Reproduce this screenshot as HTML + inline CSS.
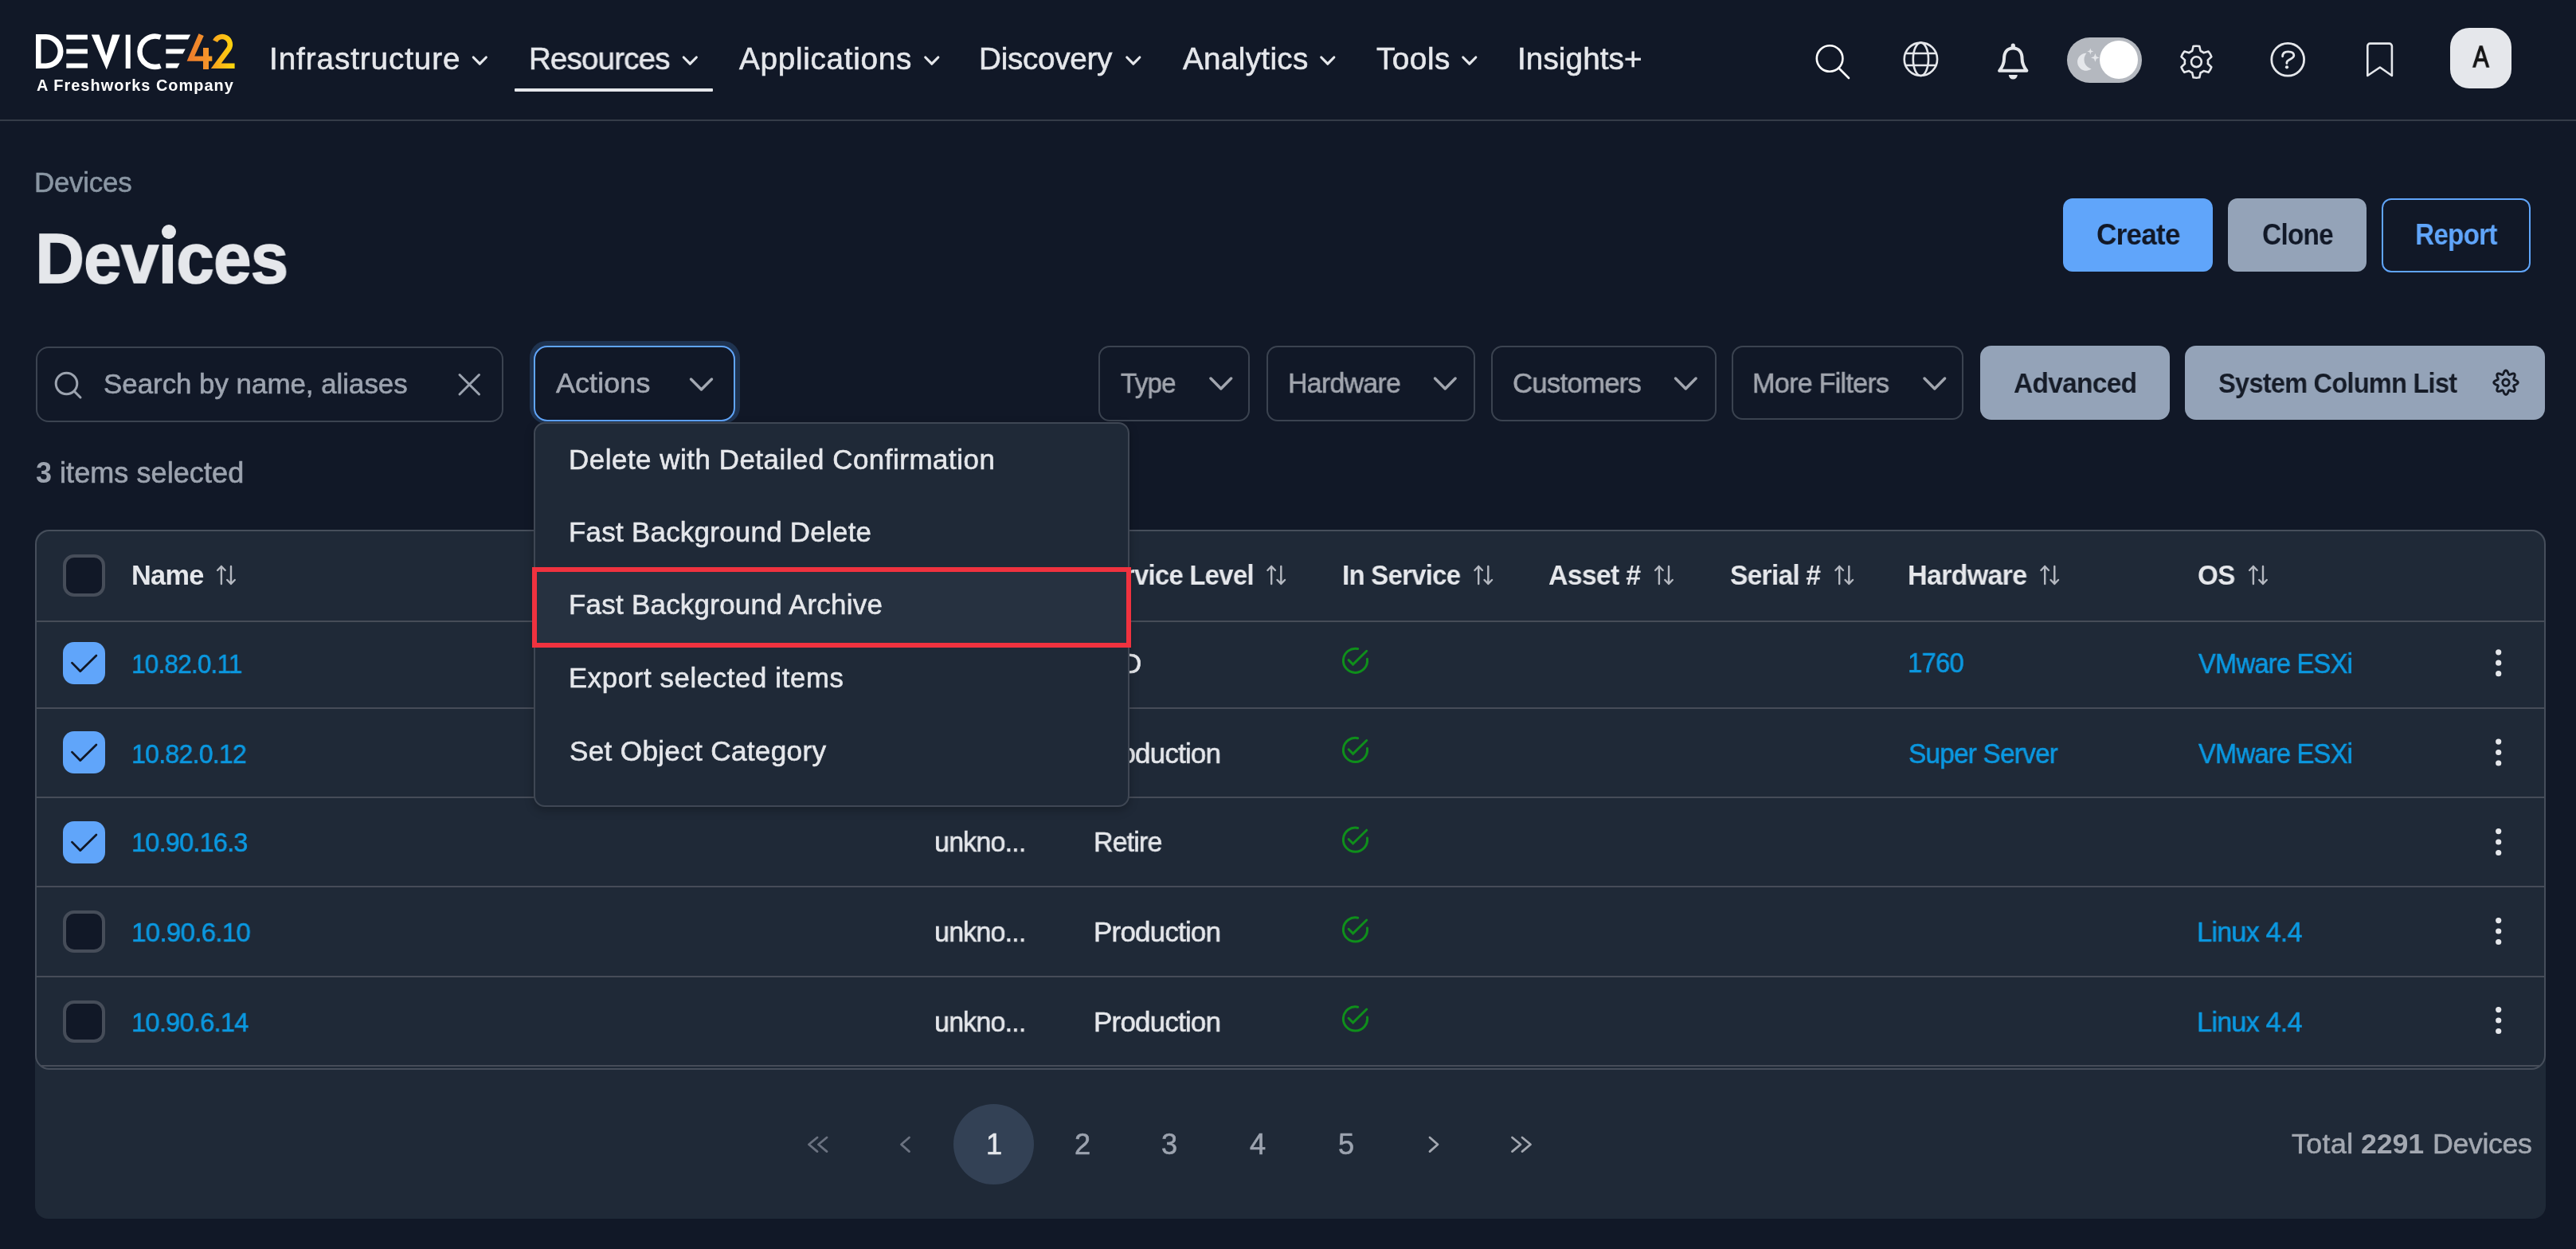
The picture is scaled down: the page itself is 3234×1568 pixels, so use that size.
<!DOCTYPE html>
<html><head><meta charset="utf-8">
<style>
html,body{margin:0;padding:0}
body{width:3234px;height:1568px;overflow:hidden;background:#111827;position:relative;font-family:"Liberation Sans",sans-serif}
.t{position:absolute;white-space:nowrap;line-height:1;-webkit-text-stroke:0.6px currentColor;will-change:transform}
.t[style*="font-weight:700"]{-webkit-text-stroke:0}
.b{position:absolute;box-sizing:border-box}
svg{position:absolute;left:0;top:0;overflow:visible}
</style></head><body>

<!-- NAV -->
<div class="b" style="left:0;top:150px;width:3234px;height:2px;background:#353c48"></div>
<div class="b" style="left:646px;top:111px;width:249px;height:4px;background:#e5e7eb;border-radius:1px"></div>
<div class="b" style="left:2595px;top:47px;width:94px;height:57px;border-radius:29px;background:#b4b8bf"></div>
<div class="b" style="left:2636px;top:51px;width:48px;height:48px;border-radius:50%;background:#ffffff"></div>
<div class="b" style="left:3076px;top:35px;width:77px;height:76px;border-radius:24px;background:#e5e7eb"></div>

<!-- HEADER BUTTONS -->
<div class="b" style="left:2590px;top:249px;width:188px;height:92px;border-radius:12px;background:#60a5fa"></div>
<div class="b" style="left:2797px;top:249px;width:174px;height:92px;border-radius:12px;background:#94a3b8"></div>
<div class="b" style="left:2990px;top:249px;width:187px;height:93px;border-radius:12px;border:2.5px solid #60a5fa"></div>

<!-- TOOLBAR -->
<div class="b" style="left:45px;top:435px;width:587px;height:95px;border-radius:16px;border:2px solid #3b4350"></div>
<div class="b" style="left:665px;top:428px;width:264px;height:104px;border-radius:21px;background:#1f3350"></div>
<div class="b" style="left:670px;top:434px;width:253px;height:95px;border-radius:17px;border:2.5px solid #60a5fa;background:#111827"></div>
<div class="b" style="left:1379px;top:434px;width:190px;height:95px;border-radius:14px;border:2px solid #3b4350"></div>
<div class="b" style="left:1590px;top:434px;width:262px;height:95px;border-radius:14px;border:2px solid #3b4350"></div>
<div class="b" style="left:1872px;top:434px;width:283px;height:95px;border-radius:14px;border:2px solid #3b4350"></div>
<div class="b" style="left:2174px;top:434px;width:291px;height:93px;border-radius:14px;border:2px solid #3b4350"></div>
<div class="b" style="left:2486px;top:434px;width:238px;height:93px;border-radius:14px;background:#94a3b8"></div>
<div class="b" style="left:2743px;top:434px;width:452px;height:93px;border-radius:14px;background:#94a3b8"></div>

<!-- TABLE CARD -->
<div class="b" style="left:44px;top:665px;width:3152px;height:865px;border-radius:16px;background:#1f2937"></div>
<div class="b" style="left:44px;top:665px;width:3152px;height:678px;border-radius:18px;border:2px solid #464e5b"></div>
<div class="b" style="left:46px;top:779px;width:3148px;height:2px;background:#464c58"></div>
<div class="b" style="left:46px;top:888px;width:3148px;height:2px;background:#464c58"></div>
<div class="b" style="left:46px;top:1000px;width:3148px;height:2px;background:#464c58"></div>
<div class="b" style="left:46px;top:1112px;width:3148px;height:2px;background:#464c58"></div>
<div class="b" style="left:46px;top:1225px;width:3148px;height:2px;background:#464c58"></div>
<div class="b" style="left:52px;top:1337px;width:3136px;height:2px;background:#464c58"></div>

<!-- checkboxes -->
<div class="b" style="left:79px;top:696px;width:53px;height:53px;border-radius:14px;border:4px solid #464d59;background:#111827"></div>
<div class="b" style="left:79px;top:806px;width:53px;height:53px;border-radius:14px;background:#60a5fa"></div>
<div class="b" style="left:79px;top:918px;width:53px;height:53px;border-radius:14px;background:#60a5fa"></div>
<div class="b" style="left:79px;top:1031px;width:53px;height:53px;border-radius:14px;background:#60a5fa"></div>
<div class="b" style="left:79px;top:1143px;width:53px;height:53px;border-radius:14px;border:4px solid #464d59;background:#111827"></div>
<div class="b" style="left:79px;top:1256px;width:53px;height:53px;border-radius:14px;border:4px solid #464d59;background:#111827"></div>

<!-- pagination current -->
<div class="b" style="left:1197px;top:1386px;width:101px;height:101px;border-radius:50%;background:#334155"></div>

<svg width="3234" height="1568" viewBox="0 0 3234 1568">
<defs>
<linearGradient id="g42" x1="234" y1="0" x2="295" y2="0" gradientUnits="userSpaceOnUse">
<stop offset="0" stop-color="#ec7a2c"/><stop offset="0.45" stop-color="#f5952a"/><stop offset="0.6" stop-color="#fbab1c"/><stop offset="1" stop-color="#fdd80c"/>
</linearGradient>
</defs>
<!-- LOGO -->
<g fill="#ffffff">
<path d="M45,43 H58 A21.5,21.5 0 0 1 58,86 H45 Z M51.5,49.5 V79.5 H57.5 A15,15 0 0 0 57.5,49.5 Z" fill-rule="evenodd"/>
<rect x="83.3" y="43.6" width="26.6" height="6"/>
<rect x="83.3" y="61.5" width="26.6" height="6"/>
<rect x="83.3" y="79.5" width="26.6" height="6"/>
<path d="M114.8,43.6 H124.5 L133.3,70 L141,43.6 H150.7 L133.8,87.6 Z"/>
<rect x="157.7" y="43.6" width="6" height="42.4"/>
<path d="M201.5,46.8 A19.2,19.2 0 1 0 201.5,82.7" fill="none" stroke="#ffffff" stroke-width="6.5"/>
<path d="M208.3,43.6 H239.2 L236,49.6 H208.3 Z"/>
<path d="M208.3,61.5 H232.7 L229.5,67.5 H208.3 Z"/>
<path d="M208.3,79.5 H225.6 L222.4,85.5 H208.3 Z"/>
</g>
<path d="M249.5,42.2 L255.8,45 L244.2,70.5 H255 V60 H262 V70.5 H266.3 V76.8 H262 V86.9 H255 V76.8 H234.6 Z" fill="url(#g42)"/>
<path d="M270.07,51.74 A9.85,9.85 0 1 1 287.07,61.55 L271.3,82.7 H294.6" fill="none" stroke="url(#g42)" stroke-width="6.5" stroke-linejoin="miter" stroke-miterlimit="10"/>

<!-- nav chevrons -->
<g fill="none" stroke="#e5e7eb" stroke-width="3.2" stroke-linecap="round" stroke-linejoin="round">
<path d="M594.3,72 L602.3,80.2 L610.3,72"/>
<path d="M858.3,72 L866.3,80.2 L874.3,72"/>
<path d="M1161.8,72 L1169.8,80.2 L1177.8,72"/>
<path d="M1414.8,72 L1422.8,80.2 L1430.8,72"/>
<path d="M1658.8,72 L1666.8,80.2 L1674.8,72"/>
<path d="M1836.8,72 L1844.8,80.2 L1852.8,72"/>
</g>

<!-- right icons -->
<g fill="none" stroke="#ffffff" stroke-width="2.6" stroke-linecap="round" stroke-linejoin="round">
<circle cx="2297.1" cy="73.5" r="16.3"/>
<path d="M2309.5,86.5 L2321,98"/>
</g>
<g fill="none" stroke="#e5e7eb" stroke-width="2.6">
<circle cx="2411.4" cy="74.3" r="20.7"/>
<ellipse cx="2411.4" cy="74.3" rx="9.6" ry="20.7"/>
<path d="M2392,67 H2431 M2392,82 H2431"/>
</g>
<g fill="none" stroke="#e5e7eb" stroke-width="4" stroke-linejoin="round">
<path d="M2527.3,60.5 C2519.5,60.5 2516,66 2516,74 C2516,80.5 2513.5,84.5 2510.2,88.8 H2544.4 C2541.1,84.5 2538.6,80.5 2538.6,74 C2538.6,66 2535.1,60.5 2527.3,60.5 Z"/>
</g>
<path d="M2527.3,54.5 a2.6,2.6 0 0 1 2.6,2.6 v2 h-5.2 v-2 a2.6,2.6 0 0 1 2.6,-2.6 Z" fill="#e5e7eb"/>
<path d="M2521.8,94 H2532.8 A5.5,5.5 0 0 1 2521.8,94 Z" fill="#e5e7eb"/>
<!-- moon & stars -->
<path d="M2619.5,66.8 A11,11 0 1 0 2625.7,86.5 A12,12 0 0 1 2619.5,66.8 Z" fill="#e5e7eb"/>
<path d="M2624.3,60.5 L2625.3,63.5 L2628.3,64.5 L2625.3,65.5 L2624.3,68.5 L2623.3,65.5 L2620.3,64.5 L2623.3,63.5 Z" fill="#e5e7eb"/>
<path d="M2630.4,67 L2631.8,71 L2635.8,72.4 L2631.8,73.8 L2630.4,77.8 L2629,73.8 L2625,72.4 L2629,71 Z" fill="#e5e7eb"/>
<!-- gear -->
<g fill="none" stroke="#e5e7eb" stroke-width="2.6" stroke-linejoin="round">
<path d="M2752.17,64.07 L2753.58,58.07 A20.0,20.0 0 0 1 2761.22,58.07 L2762.63,64.07 A14.6,14.6 0 0 1 2766.59,66.35 L2772.49,64.58 A20.0,20.0 0 0 1 2776.31,71.19 L2771.82,75.42 A14.6,14.6 0 0 1 2771.82,79.98 L2776.31,84.21 A20.0,20.0 0 0 1 2772.49,90.82 L2766.59,89.05 A14.6,14.6 0 0 1 2762.63,91.33 L2761.22,97.33 A20.0,20.0 0 0 1 2753.58,97.33 L2752.17,91.33 A14.6,14.6 0 0 1 2748.21,89.05 L2742.31,90.82 A20.0,20.0 0 0 1 2738.49,84.21 L2742.98,79.98 A14.6,14.6 0 0 1 2742.98,75.42 L2738.49,71.19 A20.0,20.0 0 0 1 2742.31,64.58 L2748.21,66.35 A14.6,14.6 0 0 1 2752.17,64.07 Z"/>
<circle cx="2757.4" cy="77.7" r="6.4"/>
</g>
<!-- help -->
<g fill="none" stroke="#e5e7eb" stroke-width="2.8" stroke-linecap="round">
<circle cx="2872.2" cy="74.8" r="20.4"/>
<path d="M2865.6,70.8 C2865.6,66.6 2867.8,64.8 2872.6,64.8 C2877.4,64.8 2879.8,66.6 2879.8,69.4 C2879.8,72 2877.8,73 2875,74.4 C2872,75.9 2870.9,76.9 2870.9,78.6 V79.6"/>
</g>
<circle cx="2871" cy="84.3" r="2.1" fill="#e5e7eb"/>
<!-- bookmark -->
<path d="M2975.5,54.6 H2999.5 A3.4,3.4 0 0 1 3002.9,58 V95 L2987.9,84.5 L2972.3,95 V58 A3.2,3.2 0 0 1 2975.5,54.6 Z" fill="none" stroke="#e5e7eb" stroke-width="2.6" stroke-linejoin="round"/>

<!-- search box icons -->
<g fill="none" stroke="#9ca3af" stroke-width="3" stroke-linecap="round">
<circle cx="83.5" cy="481.5" r="13.3"/>
<path d="M93.5,491.5 L101,499"/>
<path d="M577,470.5 L601.5,495 M601.5,470.5 L577,495"/>
</g>
<!-- actions chevron -->
<path d="M867.5,476 L880.5,489 L893.5,476" fill="none" stroke="#a3a8b2" stroke-width="3.5" stroke-linecap="round" stroke-linejoin="round"/>
<!-- filter chevrons -->
<g fill="none" stroke="#a1a5ae" stroke-width="3.5" stroke-linecap="round" stroke-linejoin="round">
<path d="M1520,475 L1532.8,488 L1545.6,475"/>
<path d="M1801.5,475 L1814.3,488 L1827.1,475"/>
<path d="M2103.5,475 L2116.3,488 L2129.1,475"/>
<path d="M2416,475 L2428.8,488 L2441.6,475"/>
</g>
<!-- System column gear -->
<g fill="none" stroke="#161b26" stroke-width="2.9" stroke-linejoin="round">
<path d="M3161.20,480.20 L3161.14,480.60 L3160.98,480.99 L3160.72,481.36 L3160.36,481.71 L3159.93,482.03 L3159.44,482.33 L3158.92,482.59 L3158.38,482.83 L3157.85,483.05 L3157.35,483.24 L3156.89,483.43 L3156.50,483.61 L3156.18,483.80 L3155.94,484.02 L3155.79,484.26 L3155.73,484.53 L3155.75,484.85 L3155.84,485.21 L3155.98,485.62 L3156.18,486.07 L3156.39,486.57 L3156.62,487.09 L3156.83,487.64 L3157.01,488.20 L3157.15,488.75 L3157.22,489.29 L3157.22,489.79 L3157.15,490.24 L3156.99,490.63 L3156.75,490.95 L3156.43,491.19 L3156.04,491.35 L3155.59,491.42 L3155.09,491.42 L3154.55,491.35 L3154.00,491.21 L3153.44,491.03 L3152.89,490.82 L3152.37,490.59 L3151.88,490.38 L3151.42,490.18 L3151.01,490.04 L3150.65,489.95 L3150.33,489.93 L3150.06,489.99 L3149.82,490.14 L3149.60,490.38 L3149.41,490.70 L3149.23,491.09 L3149.04,491.55 L3148.85,492.05 L3148.63,492.58 L3148.39,493.12 L3148.13,493.64 L3147.83,494.13 L3147.51,494.56 L3147.16,494.92 L3146.79,495.18 L3146.40,495.34 L3146.00,495.40 L3145.60,495.34 L3145.21,495.18 L3144.84,494.92 L3144.49,494.56 L3144.17,494.13 L3143.87,493.64 L3143.61,493.12 L3143.37,492.58 L3143.15,492.05 L3142.96,491.55 L3142.77,491.09 L3142.59,490.70 L3142.40,490.38 L3142.18,490.14 L3141.94,489.99 L3141.67,489.93 L3141.35,489.95 L3140.99,490.04 L3140.58,490.18 L3140.12,490.38 L3139.63,490.59 L3139.11,490.82 L3138.56,491.03 L3138.00,491.21 L3137.45,491.35 L3136.91,491.42 L3136.41,491.42 L3135.96,491.35 L3135.57,491.19 L3135.25,490.95 L3135.01,490.63 L3134.85,490.24 L3134.78,489.79 L3134.78,489.29 L3134.85,488.75 L3134.99,488.20 L3135.17,487.64 L3135.38,487.09 L3135.61,486.57 L3135.82,486.07 L3136.02,485.62 L3136.16,485.21 L3136.25,484.85 L3136.27,484.53 L3136.21,484.26 L3136.06,484.02 L3135.82,483.80 L3135.50,483.61 L3135.11,483.43 L3134.65,483.24 L3134.15,483.05 L3133.62,482.83 L3133.08,482.59 L3132.56,482.33 L3132.07,482.03 L3131.64,481.71 L3131.28,481.36 L3131.02,480.99 L3130.86,480.60 L3130.80,480.20 L3130.86,479.80 L3131.02,479.41 L3131.28,479.04 L3131.64,478.69 L3132.07,478.37 L3132.56,478.07 L3133.08,477.81 L3133.62,477.57 L3134.15,477.35 L3134.65,477.16 L3135.11,476.97 L3135.50,476.79 L3135.82,476.60 L3136.06,476.38 L3136.21,476.14 L3136.27,475.87 L3136.25,475.55 L3136.16,475.19 L3136.02,474.78 L3135.82,474.32 L3135.61,473.83 L3135.38,473.31 L3135.17,472.76 L3134.99,472.20 L3134.85,471.65 L3134.78,471.11 L3134.78,470.61 L3134.85,470.16 L3135.01,469.77 L3135.25,469.45 L3135.57,469.21 L3135.96,469.05 L3136.41,468.98 L3136.91,468.98 L3137.45,469.05 L3138.00,469.19 L3138.56,469.37 L3139.11,469.58 L3139.63,469.81 L3140.12,470.02 L3140.58,470.22 L3140.99,470.36 L3141.35,470.45 L3141.67,470.47 L3141.94,470.41 L3142.18,470.26 L3142.40,470.02 L3142.59,469.70 L3142.77,469.31 L3142.96,468.85 L3143.15,468.35 L3143.37,467.82 L3143.61,467.28 L3143.87,466.76 L3144.17,466.27 L3144.49,465.84 L3144.84,465.48 L3145.21,465.22 L3145.60,465.06 L3146.00,465.00 L3146.40,465.06 L3146.79,465.22 L3147.16,465.48 L3147.51,465.84 L3147.83,466.27 L3148.13,466.76 L3148.39,467.28 L3148.63,467.82 L3148.85,468.35 L3149.04,468.85 L3149.23,469.31 L3149.41,469.70 L3149.60,470.02 L3149.82,470.26 L3150.06,470.41 L3150.33,470.47 L3150.65,470.45 L3151.01,470.36 L3151.42,470.22 L3151.88,470.02 L3152.37,469.81 L3152.89,469.58 L3153.44,469.37 L3154.00,469.19 L3154.55,469.05 L3155.09,468.98 L3155.59,468.98 L3156.04,469.05 L3156.43,469.21 L3156.75,469.45 L3156.99,469.77 L3157.15,470.16 L3157.22,470.61 L3157.22,471.11 L3157.15,471.65 L3157.01,472.20 L3156.83,472.76 L3156.62,473.31 L3156.39,473.83 L3156.18,474.32 L3155.98,474.78 L3155.84,475.19 L3155.75,475.55 L3155.73,475.87 L3155.79,476.14 L3155.94,476.38 L3156.18,476.60 L3156.50,476.79 L3156.89,476.97 L3157.35,477.16 L3157.85,477.35 L3158.38,477.57 L3158.92,477.81 L3159.44,478.07 L3159.93,478.37 L3160.36,478.69 L3160.72,479.04 L3160.98,479.41 L3161.14,479.80 Z"/>
<circle cx="3146" cy="480.2" r="4.2"/>
</g>

<!-- sort icons -->
<g fill="none" stroke="#b4b8c0" stroke-width="2.4" stroke-linecap="round" stroke-linejoin="round" id="sorts"><path d="M277.9,733 V711 M273.09999999999997,716 L277.9,711 L282.7,716"/><path d="M290.0,711 V733 M285.2,728 L290.0,733 L294.8,728"/><path d="M1596.2,733 V711 M1591.4,716 L1596.2,711 L1601.0,716"/><path d="M1608.3,711 V733 M1603.5,728 L1608.3,733 L1613.1,728"/><path d="M1856.2,733 V711 M1851.4,716 L1856.2,711 L1861.0,716"/><path d="M1868.3,711 V733 M1863.5,728 L1868.3,733 L1873.1,728"/><path d="M2082.8999999999996,733 V711 M2078.0999999999995,716 L2082.8999999999996,711 L2087.7,716"/><path d="M2095.0,711 V733 M2090.2,728 L2095.0,733 L2099.8,728"/><path d="M2309.2,733 V711 M2304.3999999999996,716 L2309.2,711 L2314.0,716"/><path d="M2321.3,711 V733 M2316.5,728 L2321.3,733 L2326.1000000000004,728"/><path d="M2567.2,733 V711 M2562.3999999999996,716 L2567.2,711 L2572.0,716"/><path d="M2579.3,711 V733 M2574.5,728 L2579.3,733 L2584.1000000000004,728"/><path d="M2828.8999999999996,733 V711 M2824.0999999999995,716 L2828.8999999999996,711 L2833.7,716"/><path d="M2841.0,711 V733 M2836.2,728 L2841.0,733 L2845.8,728"/></g>

<!-- checkmarks in checkboxes -->
<g fill="none" stroke="#111827" stroke-width="2.7" stroke-linecap="round" stroke-linejoin="round">
<path d="M90.4,832.1 L100.8,842.8 L120.9,823"/>
<path d="M90.4,944.1 L100.8,954.8 L120.9,935"/>
<path d="M90.4,1057.1 L100.8,1067.8 L120.9,1048"/>
</g>

<!-- green status checks -->
<g fill="none" stroke="#0f8f1b" stroke-width="3.0" stroke-linecap="round" stroke-linejoin="miter" id="greens"><path d="M1716.45,827.20 A15.1,15.1 0 1 1 1704.64,814.53"/><path d="M1693.10,828.60 L1698.60,834.10 L1715.70,817.30"/><path d="M1716.45,939.40 A15.1,15.1 0 1 1 1704.64,926.73"/><path d="M1693.10,940.80 L1698.60,946.30 L1715.70,929.50"/><path d="M1716.45,1052.10 A15.1,15.1 0 1 1 1704.64,1039.43"/><path d="M1693.10,1053.50 L1698.60,1059.00 L1715.70,1042.20"/><path d="M1716.45,1164.90 A15.1,15.1 0 1 1 1704.64,1152.23"/><path d="M1693.10,1166.30 L1698.60,1171.80 L1715.70,1155.00"/><path d="M1716.45,1276.90 A15.1,15.1 0 1 1 1704.64,1264.23"/><path d="M1693.10,1278.30 L1698.60,1283.80 L1715.70,1267.00"/></g>

<!-- kebabs -->
<g fill="#e5e7eb" id="kebabs"><circle cx="3136.7" cy="818.8" r="3.6"/><circle cx="3136.7" cy="832.2" r="3.6"/><circle cx="3136.7" cy="845.7" r="3.6"/><circle cx="3136.7" cy="931.1" r="3.6"/><circle cx="3136.7" cy="944.5" r="3.6"/><circle cx="3136.7" cy="958.0" r="3.6"/><circle cx="3136.7" cy="1043.6" r="3.6"/><circle cx="3136.7" cy="1057.0" r="3.6"/><circle cx="3136.7" cy="1070.5" r="3.6"/><circle cx="3136.7" cy="1155.6" r="3.6"/><circle cx="3136.7" cy="1169.0" r="3.6"/><circle cx="3136.7" cy="1182.5" r="3.6"/><circle cx="3136.7" cy="1267.6" r="3.6"/><circle cx="3136.7" cy="1281.0" r="3.6"/><circle cx="3136.7" cy="1294.5" r="3.6"/></g>

<!-- pagination arrows -->
<g fill="none" stroke="#6b7280" stroke-width="2.8" stroke-linecap="round" stroke-linejoin="round">
<path d="M1026,1428 L1015.5,1436.8 L1026,1445.6 M1038,1428 L1027.5,1436.8 L1038,1445.6"/>
<path d="M1141.5,1428 L1131.5,1436.8 L1141.5,1445.6"/>
</g>
<g fill="none" stroke="#a3a8b1" stroke-width="2.8" stroke-linecap="round" stroke-linejoin="round">
<path d="M1795,1428 L1805,1436.8 L1795,1445.6"/>
<path d="M1898.5,1428 L1909,1436.8 L1898.5,1445.6 M1911,1428 L1921.5,1436.8 L1911,1445.6"/>
</g>
</svg>

<span class="t" style="left:46.0px;top:97.7px;font-size:19.91px;font-weight:700;color:#ffffff;letter-spacing:1.04px;">A Freshworks Company</span>
<span class="t" style="left:338.0px;top:55.1px;font-size:38.66px;font-weight:400;color:#e5e7eb;letter-spacing:0.91px;">Infrastructure</span>
<span class="t" style="left:663.8px;top:55.1px;font-size:38.66px;font-weight:400;color:#e5e7eb;letter-spacing:-0.80px;transform:scaleX(0.9952);transform-origin:3.00px 50%">Resources</span>
<span class="t" style="left:928.0px;top:55.1px;font-size:38.66px;font-weight:400;color:#e5e7eb;letter-spacing:0.72px;">Applications</span>
<span class="t" style="left:1229.0px;top:55.1px;font-size:38.66px;font-weight:400;color:#e5e7eb;letter-spacing:-0.29px;">Discovery</span>
<span class="t" style="left:1485.0px;top:55.1px;font-size:38.66px;font-weight:400;color:#e5e7eb;letter-spacing:0.33px;">Analytics</span>
<span class="t" style="left:1728.0px;top:55.1px;font-size:38.66px;font-weight:400;color:#e5e7eb;letter-spacing:0.52px;">Tools</span>
<span class="t" style="left:1905.0px;top:55.1px;font-size:38.66px;font-weight:400;color:#e5e7eb;letter-spacing:0.10px;">Insights+</span>
<span class="t" style="left:3102.0px;top:52.7px;font-size:37.65px;font-weight:400;color:#161616;letter-spacing:0.00px;-webkit-text-stroke:1.3px #161616;transform:scaleX(0.8);transform-origin:13px 50%">A</span>
<span class="t" style="left:43.4px;top:212.3px;font-size:34.88px;font-weight:400;color:#8a96a3;letter-spacing:-0.23px;">Devices</span>
<span class="t" style="left:43.8px;top:279.7px;font-size:89.83px;font-weight:700;color:#e5e7eb;letter-spacing:-0.80px;-webkit-text-stroke:1.6px #e5e7eb;transform:scaleX(0.9493);transform-origin:6.00px 50%">Devıces</span>
<span class="t" style="left:2631.6px;top:276.6px;font-size:36.34px;font-weight:700;color:#111827;letter-spacing:-0.80px;transform:scaleX(0.9656);transform-origin:1.00px 50%">Create</span>
<span class="t" style="left:2839.5px;top:276.6px;font-size:36.34px;font-weight:700;color:#111827;letter-spacing:-0.80px;transform:scaleX(0.9172);transform-origin:1.00px 50%">Clone</span>
<span class="t" style="left:3031.5px;top:276.6px;font-size:36.34px;font-weight:700;color:#60a5fa;letter-spacing:-0.80px;transform:scaleX(0.9130);transform-origin:2.00px 50%">Report</span>
<span class="t" style="left:129.8px;top:465.2px;font-size:34.88px;font-weight:400;color:#9ca3af;letter-spacing:-0.01px;">Search by name, aliases</span>
<span class="t" style="left:697.7px;top:463.5px;font-size:35.90px;font-weight:400;color:#a3a8b2;letter-spacing:0.11px;">Actions</span>
<span class="t" style="left:1406.5px;top:464.1px;font-size:35.47px;font-weight:400;color:#a1a5ae;letter-spacing:-0.80px;transform:scaleX(0.9343);transform-origin:0.00px 50%">Type</span>
<span class="t" style="left:1616.8px;top:464.1px;font-size:35.47px;font-weight:400;color:#a1a5ae;letter-spacing:-0.80px;transform:scaleX(0.9562);transform-origin:2.00px 50%">Hardware</span>
<span class="t" style="left:1898.7px;top:464.1px;font-size:35.47px;font-weight:400;color:#a1a5ae;letter-spacing:-0.80px;transform:scaleX(0.9806);transform-origin:1.00px 50%">Customers</span>
<span class="t" style="left:2200.2px;top:464.1px;font-size:35.47px;font-weight:400;color:#a1a5ae;letter-spacing:-0.80px;transform:scaleX(0.9635);transform-origin:2.00px 50%">More Filters</span>
<span class="t" style="left:2528.3px;top:463.6px;font-size:34.74px;font-weight:700;color:#161c28;letter-spacing:-0.80px;transform:scaleX(0.9663);transform-origin:0.00px 50%">Advanced</span>
<span class="t" style="left:2785.0px;top:463.6px;font-size:34.74px;font-weight:700;color:#161c28;letter-spacing:-0.80px;transform:scaleX(0.9365);transform-origin:1.00px 50%">System Column List</span>
<span class="t" style="left:44.8px;top:575.7px;font-size:36.05px;font-weight:700;color:#9ca3af;letter-spacing:0.00px;">3</span>
<span class="t" style="left:75.2px;top:575.7px;font-size:36.05px;font-weight:400;color:#9ca3af;letter-spacing:0.06px;">items selected</span>
<span class="t" style="left:164.5px;top:704.8px;font-size:34.30px;font-weight:700;color:#e5e7eb;letter-spacing:-0.71px;">Name</span>
<span class="t" style="left:1373.0px;top:704.8px;font-size:34.30px;font-weight:700;color:#e5e7eb;letter-spacing:-0.80px;transform:scaleX(0.9608);transform-origin:0.00px 50%">Service Level</span>
<span class="t" style="left:1684.7px;top:704.8px;font-size:34.30px;font-weight:700;color:#e5e7eb;letter-spacing:-0.80px;transform:scaleX(0.9619);transform-origin:2.00px 50%">In Service</span>
<span class="t" style="left:1944.1px;top:704.8px;font-size:34.30px;font-weight:700;color:#e5e7eb;letter-spacing:-0.80px;transform:scaleX(0.9894);transform-origin:0.00px 50%">Asset #</span>
<span class="t" style="left:2172.2px;top:704.8px;font-size:34.30px;font-weight:700;color:#e5e7eb;letter-spacing:-0.80px;transform:scaleX(0.9797);transform-origin:0.00px 50%">Serial #</span>
<span class="t" style="left:2395.3px;top:704.8px;font-size:34.30px;font-weight:700;color:#e5e7eb;letter-spacing:-0.80px;transform:scaleX(0.9957);transform-origin:2.00px 50%">Hardware</span>
<span class="t" style="left:2759.0px;top:704.8px;font-size:34.30px;font-weight:700;color:#e5e7eb;letter-spacing:-0.80px;transform:scaleX(0.9685);transform-origin:1.00px 50%">OS</span>
<span class="t" style="left:164.5px;top:815.7px;font-size:34.01px;font-weight:400;color:#0b98e0;letter-spacing:-0.80px;transform:scaleX(0.9219);transform-origin:2.00px 50%">10.82.0.11</span>
<span class="t" style="left:1172.8px;top:814.8px;font-size:35.03px;font-weight:400;color:#e5e7eb;letter-spacing:-0.80px;transform:scaleX(0.9688);transform-origin:2.00px 50%">unkno...</span>
<span class="t" style="left:1407.5px;top:814.8px;font-size:35.03px;font-weight:400;color:#e5e7eb;letter-spacing:0.00px;">D</span>
<span class="t" style="left:2395.3px;top:815.4px;font-size:34.30px;font-weight:400;color:#0b98e0;letter-spacing:-0.80px;transform:scaleX(0.9559);transform-origin:2.00px 50%">1760</span>
<span class="t" style="left:2759.5px;top:814.8px;font-size:35.03px;font-weight:400;color:#0b98e0;letter-spacing:-0.80px;transform:scaleX(0.9320);transform-origin:0.00px 50%">VMware ESXi</span>
<span class="t" style="left:164.5px;top:928.6px;font-size:34.01px;font-weight:400;color:#0b98e0;letter-spacing:-0.80px;transform:scaleX(0.9429);transform-origin:2.00px 50%">10.82.0.12</span>
<span class="t" style="left:1172.8px;top:927.7px;font-size:35.03px;font-weight:400;color:#e5e7eb;letter-spacing:-0.80px;transform:scaleX(0.9688);transform-origin:2.00px 50%">unkno...</span>
<span class="t" style="left:1372.6px;top:927.7px;font-size:35.03px;font-weight:400;color:#e5e7eb;letter-spacing:-0.80px;transform:scaleX(0.9985);transform-origin:2.00px 50%">Production</span>
<span class="t" style="left:2396.3px;top:927.7px;font-size:35.03px;font-weight:400;color:#0b98e0;letter-spacing:-0.80px;transform:scaleX(0.9510);transform-origin:1.00px 50%">Super Server</span>
<span class="t" style="left:2759.5px;top:927.7px;font-size:35.03px;font-weight:400;color:#0b98e0;letter-spacing:-0.80px;transform:scaleX(0.9320);transform-origin:0.00px 50%">VMware ESXi</span>
<span class="t" style="left:164.5px;top:1040.2px;font-size:34.01px;font-weight:400;color:#0b98e0;letter-spacing:-0.80px;transform:scaleX(0.9529);transform-origin:2.00px 50%">10.90.16.3</span>
<span class="t" style="left:1172.8px;top:1039.3px;font-size:35.03px;font-weight:400;color:#e5e7eb;letter-spacing:-0.80px;transform:scaleX(0.9688);transform-origin:2.00px 50%">unkno...</span>
<span class="t" style="left:1372.6px;top:1039.3px;font-size:35.03px;font-weight:400;color:#e5e7eb;letter-spacing:-0.80px;transform:scaleX(0.9636);transform-origin:2.00px 50%">Retire</span>
<span class="t" style="left:164.5px;top:1153.3px;font-size:34.01px;font-weight:400;color:#0b98e0;letter-spacing:-0.80px;transform:scaleX(0.9761);transform-origin:2.00px 50%">10.90.6.10</span>
<span class="t" style="left:1172.8px;top:1152.4px;font-size:35.03px;font-weight:400;color:#e5e7eb;letter-spacing:-0.80px;transform:scaleX(0.9688);transform-origin:2.00px 50%">unkno...</span>
<span class="t" style="left:1372.6px;top:1152.4px;font-size:35.03px;font-weight:400;color:#e5e7eb;letter-spacing:-0.80px;transform:scaleX(0.9985);transform-origin:2.00px 50%">Production</span>
<span class="t" style="left:2757.5px;top:1152.4px;font-size:35.03px;font-weight:400;color:#0b98e0;letter-spacing:-0.80px;transform:scaleX(0.9764);transform-origin:2.00px 50%">Linux 4.4</span>
<span class="t" style="left:164.5px;top:1265.7px;font-size:34.01px;font-weight:400;color:#0b98e0;letter-spacing:-0.80px;transform:scaleX(0.9595);transform-origin:2.00px 50%">10.90.6.14</span>
<span class="t" style="left:1172.8px;top:1264.8px;font-size:35.03px;font-weight:400;color:#e5e7eb;letter-spacing:-0.80px;transform:scaleX(0.9688);transform-origin:2.00px 50%">unkno...</span>
<span class="t" style="left:1372.6px;top:1264.8px;font-size:35.03px;font-weight:400;color:#e5e7eb;letter-spacing:-0.80px;transform:scaleX(0.9985);transform-origin:2.00px 50%">Production</span>
<span class="t" style="left:2757.5px;top:1264.8px;font-size:35.03px;font-weight:400;color:#0b98e0;letter-spacing:-0.80px;transform:scaleX(0.9764);transform-origin:2.00px 50%">Linux 4.4</span>
<span class="t" style="left:1348.6px;top:1418.5px;font-size:36.19px;font-weight:400;color:#9ca3af;letter-spacing:0.00px;">2</span>
<span class="t" style="left:1458.1px;top:1418.5px;font-size:36.19px;font-weight:400;color:#9ca3af;letter-spacing:0.00px;">3</span>
<span class="t" style="left:1568.6px;top:1418.5px;font-size:36.19px;font-weight:400;color:#9ca3af;letter-spacing:0.00px;">4</span>
<span class="t" style="left:1679.7px;top:1418.5px;font-size:36.19px;font-weight:400;color:#9ca3af;letter-spacing:0.00px;">5</span>
<span class="t" style="left:1238.1px;top:1418.5px;font-size:36.19px;font-weight:400;color:#e5e7eb;letter-spacing:0.00px;">1</span>
<span class="t" style="left:2876.9px;top:1418.7px;font-size:35.76px;font-weight:400;color:#a3a8b1;letter-spacing:0.41px;">Total</span>
<span class="t" style="left:2963.7px;top:1418.7px;font-size:35.76px;font-weight:700;color:#a3a8b1;letter-spacing:-0.15px;">2291</span>
<span class="t" style="left:3054.0px;top:1418.7px;font-size:35.76px;font-weight:400;color:#a3a8b1;letter-spacing:-0.36px;">Devices</span>
<div class="b" style="left:203.2px;top:281.6px;width:18px;height:18px;border-radius:50%;background:#e5e7eb"></div>

<!-- DROPDOWN MENU -->
<div class="b" style="left:670px;top:530px;width:748px;height:483px;border-radius:14px;border:2px solid #3f4754;background:#1f2937;box-shadow:0 4px 12px rgba(0,0,0,0.25)"></div>
<div class="b" style="left:672px;top:716px;width:744px;height:93px;background:#263140"></div>
<span class="t" style="left:713.7px;top:560.2px;font-size:34.88px;font-weight:400;color:#e5e7eb;letter-spacing:0.54px;">Delete with Detailed Confirmation</span>
<span class="t" style="left:713.7px;top:651.4px;font-size:34.88px;font-weight:400;color:#e5e7eb;letter-spacing:0.28px;">Fast Background Delete</span>
<span class="t" style="left:713.7px;top:742.0px;font-size:34.88px;font-weight:400;color:#e5e7eb;letter-spacing:0.28px;">Fast Background Archive</span>
<span class="t" style="left:713.7px;top:834.1px;font-size:34.74px;font-weight:400;color:#e5e7eb;letter-spacing:0.64px;">Export selected items</span>
<span class="t" style="left:714.7px;top:925.1px;font-size:35.17px;font-weight:400;color:#e5e7eb;letter-spacing:0.30px;">Set Object Category</span>
<div class="b" style="left:668px;top:712px;width:752px;height:101px;border:6px solid #f0323f"></div>

</body></html>
